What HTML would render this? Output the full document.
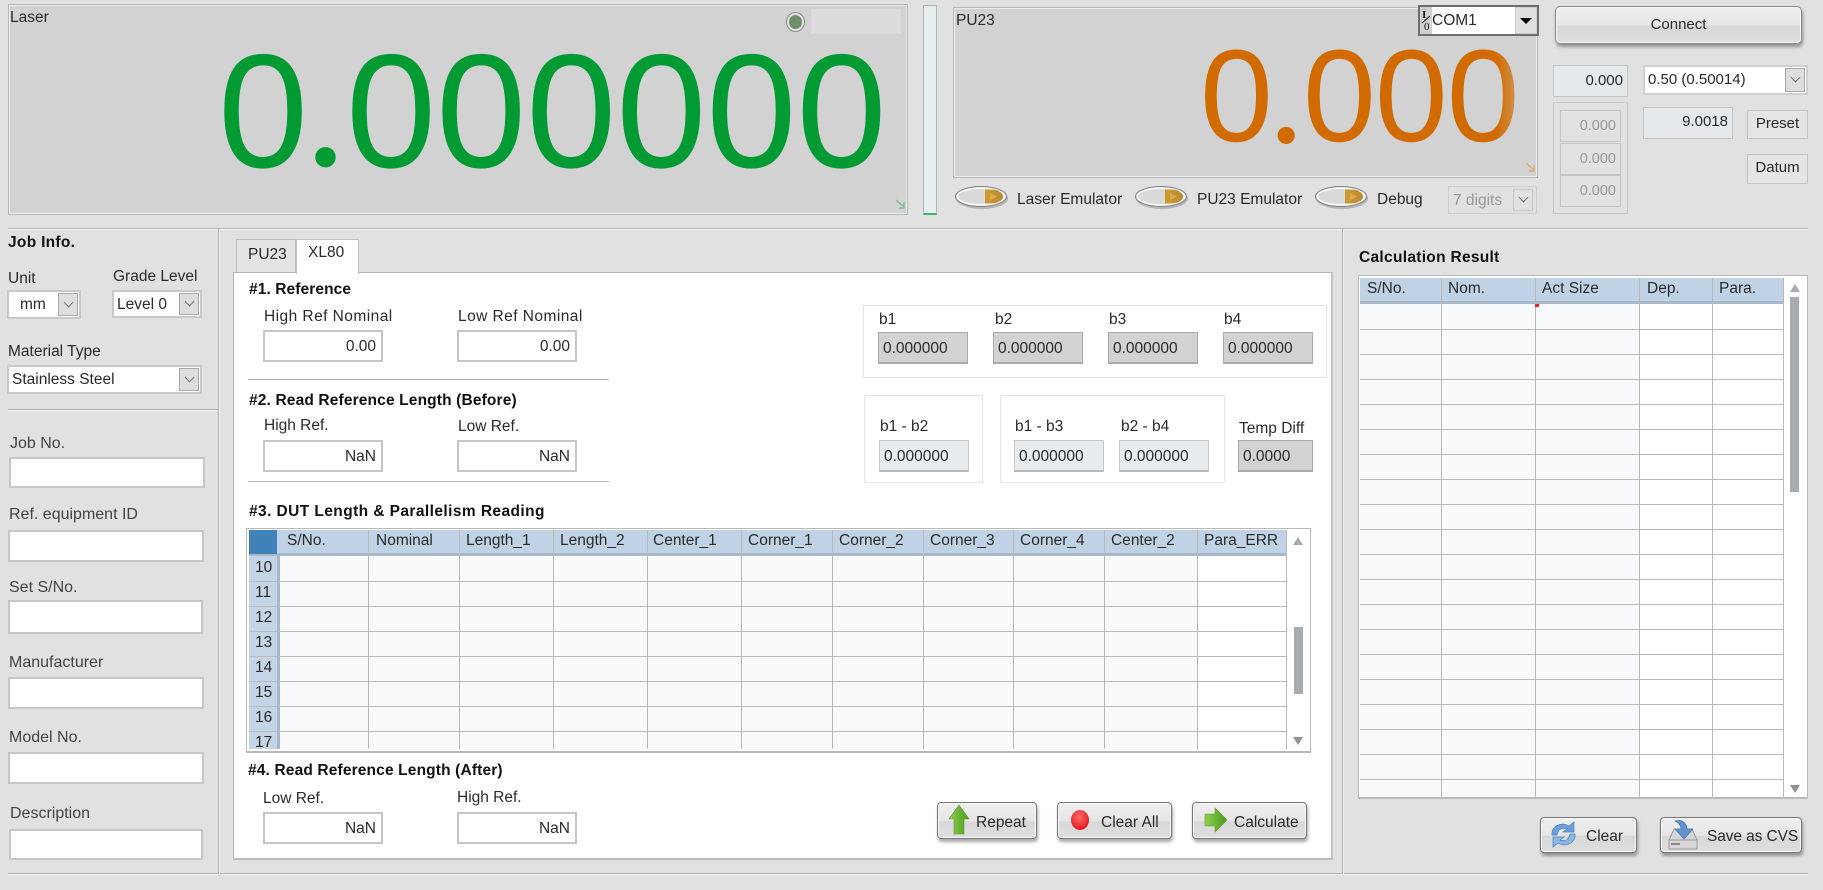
<!DOCTYPE html>
<html><head><meta charset="utf-8"><style>
html,body{margin:0;padding:0;background:#e1e1e1}
#r{position:relative;width:1823px;height:890px;overflow:hidden;background:#e1e1e1;font:15.5px/20px "Liberation Sans",sans-serif;color:#2a2a2a;filter:blur(.35px)}
#r div,#r span.t,#r span.n,#r svg{position:absolute}
.t{white-space:nowrap;line-height:20px}
.n{white-space:nowrap;transform-origin:0 0}
.b{font-weight:bold;color:#111;letter-spacing:.3px}
.g{color:#444}
.w{letter-spacing:.45px}
.in{background:#fff;border:2px solid #c6c6c6;box-sizing:border-box;text-align:right;padding-right:5px;line-height:29px}
.gf{background:#d2d2d2;border:1px solid #aaa;border-bottom:2px solid #aaa;box-sizing:border-box;padding-left:4px;line-height:31px}
.lf{background:#e8ecef;border:1px solid #c4c8ca;border-bottom:2px solid #b5b9bb;box-sizing:border-box;padding-left:4px;line-height:31px}
.box{background:#fff;border:1px solid #e4e4e4;box-sizing:border-box}
.cb{background:#fff;border:2px solid #c9c9c9;box-sizing:border-box;line-height:26px}
.ar{background:#dedede;border:1px solid #a9a9a9;box-sizing:border-box}
.ar:after{content:"";position:absolute;left:50%;top:50%;width:6px;height:6px;margin:-6px 0 0 -3px;border-right:1px solid #777;border-bottom:1px solid #777;transform:rotate(45deg)}
.btn{border:1px solid #777;border-radius:4px;box-sizing:border-box;background:linear-gradient(#efefef 0,#e6e6e6 50%,#d8d8d8 54%,#dedede 100%);box-shadow:inset 0 0 0 1px #f6f6f6,1px 3px 3px rgba(0,0,0,.35)}
.sb{background:#e6e9ec;border:1px solid #c3c6c8;box-sizing:border-box;text-align:center;line-height:26px}
.vl{width:1px;background:#b9b9b9}
.hl{height:1px;background:#b3b3b3;box-shadow:0 1px 0 #f2f2f2}
.ln{background:#b5b5b5}
.rows{background:linear-gradient(transparent 24px,#b9b9b9 24px);background-size:100% 25px}
.up{width:0;height:0;border:5px solid transparent;border-bottom:8px solid #a8acae;border-top:0}
.dn{width:0;height:0;border:5px solid transparent;border-top:8px solid #8f9396;border-bottom:0}
</style></head><body><div id="r">

<!-- Laser panel -->
<div style="left:8px;top:4px;width:900px;height:211px;background:#d2d2d2;border:1px solid #b4babb;box-sizing:border-box;box-shadow:inset 0 0 0 1px #ececec"></div>
<span class="t" style="left:10px;top:8px">Laser</span>
<div style="left:787px;top:13px;width:17px;height:18px;border-radius:50%;background:#6f8f6b;border:2px solid #e3e3e3;box-shadow:0 0 0 1px #8b8b8b;box-sizing:border-box"></div>
<div style="left:811px;top:9px;width:90px;height:25px;background:#dcdcdc"></div>
<span class="n" style="left:218px;top:31px;font-size:162px;line-height:162px;color:#029a33">0</span>
<span class="n" style="left:304px;top:22px;font:172px/172px 'Liberation Serif',serif;color:#029a33">.</span>
<span class="n" style="left:346px;top:31px;font-size:162px;line-height:162px;color:#029a33">000000</span>
<svg style="left:895px;top:199px" width="11" height="10" viewBox="0 0 11 10"><path d="M1 1L9 8M9 3V9H4" fill="none" stroke="#6fc08a" stroke-width="1.2"/></svg>

<!-- bar -->
<div style="left:923px;top:5px;width:14px;height:210px;background:#e8edef;border:1px solid #aeb3b4;border-bottom:2px solid #3db56a;box-sizing:border-box"></div>

<!-- PU23 panel -->
<div style="left:953px;top:7px;width:585px;height:171px;background:#d2d2d2;border:1px solid #b4babb;box-sizing:border-box;box-shadow:inset 0 0 0 1px #ececec"></div>
<span class="t" style="left:956px;top:11px">PU23</span>
<span class="n" style="left:1200px;top:30px;font-size:131px;line-height:131px;color:#d16b00">0</span>
<span class="n" style="left:1268px;top:22px;font:145px/145px 'Liberation Serif',serif;color:#d16b00">.</span>
<span class="n" style="left:1303px;top:30px;font-size:131px;line-height:131px;letter-spacing:-1px;color:#d16b00">000</span>
<div style="left:1497px;top:40px;width:18px;height:105px;background:linear-gradient(90deg,rgba(210,210,210,0),rgba(210,210,210,.35))"></div>
<svg style="left:1525px;top:162px" width="11" height="10" viewBox="0 0 11 10"><path d="M1 1L9 8M9 3V9H4" fill="none" stroke="#e2a56a" stroke-width="1.2"/></svg>

<!-- COM1 -->
<div style="left:1418px;top:5px;width:121px;height:31px;background:#d0d0d0;border:2px solid #6e6e6e;box-sizing:border-box"></div>
<div style="left:1432px;top:7px;width:83px;height:27px;background:#fff"></div>
<div style="left:1516px;top:8px;width:20px;height:25px;background:#e0e0e0"></div>
<div style="left:1520px;top:18px;width:0;height:0;border:6px solid transparent;border-top:6px solid #000;border-bottom:0"></div>
<svg style="left:1420px;top:8px" width="13" height="24" viewBox="0 0 13 24"><text x="2" y="10" font-family="Liberation Serif" font-weight="bold" font-size="11" fill="#111">I</text><path d="M10 8L2 15" stroke="#111"/><text x="4" y="22" font-family="Liberation Serif" font-size="11" fill="#111">0</text></svg>
<span class="t" style="left:1432px;top:11px;font-size:15.5px">COM1</span>

<!-- Connect -->
<div class="btn" style="left:1555px;top:6px;width:247px;height:38px;border-radius:5px;border-color:#8a8a8a;text-align:center;line-height:36px;font-size:15px">Connect</div>

<div class="sb" style="left:1553px;top:65px;width:75px;height:32px;text-align:right;padding-right:4px;line-height:30px;font-size:15px">0.000</div>
<div class="cb" style="left:1643px;top:65px;width:165px;height:30px;padding-left:3px;border-color:#d0d0d0;font-size:15px">0.50 (0.50014)</div>
<div class="ar" style="left:1785px;top:68px;width:20px;height:24px"></div>

<div style="left:1553px;top:102px;width:75px;height:112px;background:#e1e1e1;border:1px solid #c5c7c8;box-sizing:border-box"></div>
<div class="sb" style="left:1560px;top:110px;width:61px;height:32px;background:#e1e1e1;color:#999;text-align:right;padding-right:4px;line-height:30px;font-size:14.5px">0.000</div>
<div class="sb" style="left:1560px;top:143px;width:61px;height:32px;background:#e1e1e1;color:#999;text-align:right;padding-right:4px;line-height:30px;font-size:14.5px">0.000</div>
<div class="sb" style="left:1560px;top:175px;width:61px;height:32px;background:#e1e1e1;color:#999;text-align:right;padding-right:4px;line-height:30px;font-size:14.5px">0.000</div>
<div class="sb" style="left:1643px;top:107px;width:90px;height:32px;text-align:right;padding-right:4px;line-height:28px;font-size:15px">9.0018</div>
<div class="sb" style="left:1747px;top:110px;width:61px;height:29px;background:#e3e5e6;font-size:15px;line-height:25px">Preset</div>
<div class="sb" style="left:1747px;top:154px;width:61px;height:30px;background:#e3e5e6;font-size:15px;line-height:26px">Datum</div>

<!-- toggles -->
<svg style="left:954px;top:185px" width="56" height="26" viewBox="0 0 56 26"><defs><linearGradient id="tg" x1="0" y1="0" x2="1" y2="0"><stop offset="0" stop-color="#cf9a2e"/><stop offset="1" stop-color="#b98a32"/></linearGradient><g id="tog"><ellipse cx="28" cy="13.5" rx="26" ry="10.5" fill="#b5b5b5"/><ellipse cx="27" cy="11.5" rx="25.5" ry="10" fill="#e4e4e4" stroke="#858585"/><ellipse cx="27" cy="11.5" rx="23.5" ry="8.2" fill="#d9d9d9" stroke="#fff" stroke-width="1.2"/><path d="M31 4.5h6c8 0 12 4 12 7s-4 7-12 7h-6z" fill="url(#tg)"/><path d="M36 8l7 3.5-7 3.5z" fill="#d9ad50"/></g></defs><use href="#tog"/></svg>
<span class="t" style="left:1017px;top:190px">Laser Emulator</span>
<svg style="left:1134px;top:185px" width="56" height="26" viewBox="0 0 56 26"><use href="#tog"/></svg>
<span class="t" style="left:1197px;top:190px">PU23 Emulator</span>
<svg style="left:1314px;top:185px" width="56" height="26" viewBox="0 0 56 26"><use href="#tog"/></svg>
<span class="t" style="left:1377px;top:190px">Debug</span>
<div style="left:1448px;top:186px;width:89px;height:28px;border:1px solid #cfcfcf;box-sizing:border-box;color:#999;padding-left:4px;line-height:28px">7 digits</div>
<div class="ar" style="left:1513px;top:189px;width:20px;height:22px;background:#e1e1e1;border-color:#c8c8c8"></div>

<!-- dividers -->
<div class="hl" style="left:8px;top:228px;width:1800px"></div>
<div class="hl" style="left:8px;top:873px;width:1800px"></div>
<div class="hl" style="left:8px;top:409px;width:210px"></div>
<div class="vl" style="left:218px;top:229px;height:645px;box-shadow:1px 0 0 #f2f2f2;background:#b3b3b3"></div>
<div class="vl" style="left:1342px;top:229px;height:645px;box-shadow:1px 0 0 #f2f2f2;background:#b3b3b3"></div>

<!-- Left column -->
<span class="t b" style="left:8px;top:233px">Job Info.</span>
<span class="t" style="left:8px;top:269px">Unit</span>
<span class="t" style="left:113px;top:267px">Grade Level</span>
<div class="cb" style="left:7px;top:290px;width:74px;height:29px;padding-left:11px">mm</div>
<div class="ar" style="left:58px;top:293px;width:20px;height:23px"></div>
<div class="cb" style="left:112px;top:290px;width:90px;height:28px;padding-left:3px">Level 0</div>
<div class="ar" style="left:179px;top:293px;width:20px;height:22px"></div>
<span class="t" style="left:8px;top:342px">Material Type</span>
<div class="cb" style="left:7px;top:365px;width:195px;height:29px;padding-left:3px">Stainless Steel</div>
<div class="ar" style="left:179px;top:368px;width:20px;height:23px"></div>

<span class="t g" style="left:10px;top:434px;font-size:16px">Job No.</span>
<div class="in" style="left:9px;top:457px;width:196px;height:31px"></div>
<span class="t g" style="left:9px;top:505px;font-size:16px">Ref. equipment ID</span>
<div class="in" style="left:8px;top:530px;width:196px;height:32px"></div>
<span class="t g" style="left:9px;top:578px;font-size:16px">Set S/No.</span>
<div class="in" style="left:8px;top:600px;width:195px;height:34px"></div>
<span class="t g" style="left:9px;top:653px;font-size:16px">Manufacturer</span>
<div class="in" style="left:8px;top:677px;width:196px;height:32px"></div>
<span class="t g" style="left:9px;top:728px;font-size:16px">Model No.</span>
<div class="in" style="left:8px;top:752px;width:196px;height:32px"></div>
<span class="t g" style="left:10px;top:804px;font-size:16px">Description</span>
<div class="in" style="left:9px;top:829px;width:194px;height:31px"></div>

<!-- Tabs -->
<div style="left:236px;top:239px;width:60px;height:33px;background:#e4e4e4;border:1px solid #bcbcbc;border-bottom:0;box-sizing:border-box"></div>
<span class="t" style="left:248px;top:245px">PU23</span>
<div style="left:233px;top:272px;width:1100px;height:588px;background:#fff;border:1px solid #b7b7b7;border-bottom:2px solid #bcbcbc;border-right:2px solid #c4c4c4;box-sizing:border-box"></div>
<div style="left:296px;top:239px;width:63px;height:35px;background:#fff;border:1px solid #c4c4c4;border-bottom:0;box-sizing:border-box"></div>
<span class="t" style="left:308px;top:243px">XL80</span>

<span class="t b" style="left:249px;top:280px;letter-spacing:.1px">#1. Reference</span>
<span class="t w" style="left:264px;top:307px">High Ref Nominal</span>
<span class="t w" style="left:458px;top:307px">Low Ref Nominal</span>
<div class="in" style="left:263px;top:330px;width:120px;height:32px">0.00</div>
<div class="in" style="left:457px;top:330px;width:120px;height:32px">0.00</div>
<div class="ln" style="left:248px;top:379px;width:361px;height:1px"></div>

<span class="t b" style="left:249px;top:391px;letter-spacing:.15px">#2. Read Reference Length (Before)</span>
<span class="t" style="left:264px;top:416px">High Ref.</span>
<span class="t" style="left:458px;top:417px">Low Ref.</span>
<div class="in" style="left:263px;top:440px;width:120px;height:32px">NaN</div>
<div class="in" style="left:457px;top:440px;width:120px;height:32px">NaN</div>
<div class="ln" style="left:248px;top:481px;width:361px;height:1px"></div>

<span class="t b" style="left:249px;top:502px;letter-spacing:.42px">#3. DUT Length &amp; Parallelism Reading</span>

<!-- b group -->
<div class="box" style="left:863px;top:305px;width:464px;height:73px"></div>
<span class="t" style="left:879px;top:310px">b1</span><span class="t" style="left:995px;top:310px">b2</span><span class="t" style="left:1109px;top:310px">b3</span><span class="t" style="left:1224px;top:310px">b4</span>
<div class="gf" style="left:878px;top:332px;width:90px;height:32px">0.000000</div>
<div class="gf" style="left:993px;top:332px;width:90px;height:32px">0.000000</div>
<div class="gf" style="left:1108px;top:332px;width:90px;height:32px">0.000000</div>
<div class="gf" style="left:1223px;top:332px;width:90px;height:32px">0.000000</div>

<div class="box" style="left:864px;top:395px;width:119px;height:88px"></div>
<div class="box" style="left:1000px;top:395px;width:225px;height:88px"></div>
<span class="t" style="left:880px;top:417px">b1 - b2</span>
<span class="t" style="left:1015px;top:417px">b1 - b3</span>
<span class="t" style="left:1121px;top:417px">b2 - b4</span>
<span class="t" style="left:1239px;top:419px">Temp Diff</span>
<div class="lf" style="left:879px;top:440px;width:90px;height:32px">0.000000</div>
<div class="lf" style="left:1014px;top:440px;width:90px;height:32px">0.000000</div>
<div class="lf" style="left:1119px;top:440px;width:90px;height:32px">0.000000</div>
<div class="gf" style="left:1238px;top:440px;width:75px;height:32px">0.0000</div>

<!-- Table 1 -->
<div style="left:246px;top:528px;width:1065px;height:225px;background:#fff;border:1px solid #b9b9b9;border-bottom:2px solid #b9b9b9;box-sizing:border-box"></div>
<div style="left:280px;top:557px;width:917px;height:192px;background:#f9fafc"></div>
<div style="left:249px;top:530px;width:1038px;height:23px;background:#c0d2e5"></div>
<div style="left:249px;top:553px;width:1038px;height:3px;background:#a9b8c8"></div>
<div style="left:249px;top:530px;width:28px;height:24px;background:#3f82b8"></div>
<div style="left:249px;top:556px;width:31px;height:193px;background:#c4d5e7"></div>
<div style="left:277px;top:556px;width:3px;height:193px;background:#a9b8c8"></div>
<div class="rows" style="left:249px;top:557px;width:1038px;height:192px"></div>
<div class="vl" style="left:368px;top:530px;height:219px"></div>
<div class="vl" style="left:459px;top:530px;height:219px"></div>
<div class="vl" style="left:553px;top:530px;height:219px"></div>
<div class="vl" style="left:647px;top:530px;height:219px"></div>
<div class="vl" style="left:741px;top:530px;height:219px"></div>
<div class="vl" style="left:832px;top:530px;height:219px"></div>
<div class="vl" style="left:923px;top:530px;height:219px"></div>
<div class="vl" style="left:1013px;top:530px;height:219px"></div>
<div class="vl" style="left:1104px;top:530px;height:219px"></div>
<div class="vl" style="left:1197px;top:530px;height:219px"></div>
<div class="vl" style="left:1286px;top:530px;height:219px"></div>
<span class="t" style="left:287px;top:531px">S/No.</span>
<span class="t" style="left:376px;top:531px">Nominal</span>
<span class="t" style="left:466px;top:531px">Length_1</span>
<span class="t" style="left:560px;top:531px">Length_2</span>
<span class="t" style="left:653px;top:531px">Center_1</span>
<span class="t" style="left:748px;top:531px">Corner_1</span>
<span class="t" style="left:839px;top:531px">Corner_2</span>
<span class="t" style="left:930px;top:531px">Corner_3</span>
<span class="t" style="left:1020px;top:531px">Corner_4</span>
<span class="t" style="left:1111px;top:531px">Center_2</span>
<span class="t" style="left:1204px;top:531px">Para_ERR</span>
<span class="t" style="left:255px;top:558px">10</span>
<span class="t" style="left:255px;top:583px">11</span>
<span class="t" style="left:255px;top:608px">12</span>
<span class="t" style="left:255px;top:633px">13</span>
<span class="t" style="left:255px;top:658px">14</span>
<span class="t" style="left:255px;top:683px">15</span>
<span class="t" style="left:255px;top:708px">16</span>
<span class="t" style="left:255px;top:733px;height:16px;overflow:hidden">17</span>
<div class="up" style="left:1293px;top:537px"></div>
<div style="left:1294px;top:627px;width:9px;height:67px;background:#a8acae"></div>
<div class="dn" style="left:1293px;top:737px"></div>

<span class="t b" style="left:248px;top:761px;letter-spacing:.15px">#4. Read Reference Length (After)</span>
<span class="t" style="left:263px;top:789px">Low Ref.</span>
<span class="t" style="left:457px;top:788px">High Ref.</span>
<div class="in" style="left:263px;top:812px;width:120px;height:32px">NaN</div>
<div class="in" style="left:457px;top:812px;width:120px;height:32px">NaN</div>

<!-- Buttons -->
<div class="btn" style="left:937px;top:802px;width:100px;height:37px"></div>
<svg style="left:947px;top:804px" width="24" height="32" viewBox="0 0 24 32"><defs><linearGradient id="gr" x1="0" y1="0" x2="1" y2="0"><stop offset="0" stop-color="#8fd14f"/><stop offset="1" stop-color="#4a9a1e"/></linearGradient></defs><path d="M12 1L22 15H17V30H7V15H2Z" fill="url(#gr)" stroke="#5c9a2e" stroke-width=".6"/></svg>
<span class="t" style="left:976px;top:813px">Repeat</span>
<div class="btn" style="left:1057px;top:802px;width:115px;height:37px"></div>
<svg style="left:1070px;top:808px" width="20" height="24" viewBox="0 0 20 24"><defs><radialGradient id="rd" cx=".45" cy=".35" r=".7"><stop offset="0" stop-color="#ff6a6a"/><stop offset="1" stop-color="#e2121e"/></radialGradient></defs><ellipse cx="10" cy="12" rx="9" ry="10" fill="url(#rd)"/></svg>
<span class="t" style="left:1101px;top:813px">Clear All</span>
<div class="btn" style="left:1192px;top:802px;width:115px;height:37px"></div>
<svg style="left:1204px;top:807px" width="24" height="26" viewBox="0 0 24 26"><path d="M1 7H11V1L23 13L11 25V19H1Z" fill="url(#gr)" stroke="#5c9a2e" stroke-width=".6"/></svg>
<span class="t" style="left:1234px;top:813px">Calculate</span>

<!-- Calculation Result -->
<span class="t b" style="left:1359px;top:248px">Calculation Result</span>
<div style="left:1358px;top:275px;width:450px;height:524px;background:#fff;border:1px solid #b9b9b9;border-bottom:2px solid #b9b9b9;box-sizing:border-box"></div>
<div style="left:1360px;top:304px;width:279px;height:493px;background:#f9fafc"></div>
<div style="left:1360px;top:278px;width:424px;height:23px;background:#c0d2e5"></div>
<div style="left:1360px;top:301px;width:424px;height:3px;background:#a9b8c8"></div>
<div class="rows" style="left:1360px;top:305px;width:424px;height:492px"></div>
<div class="vl" style="left:1441px;top:278px;height:519px"></div>
<div class="vl" style="left:1535px;top:278px;height:519px"></div>
<div class="vl" style="left:1639px;top:278px;height:519px"></div>
<div class="vl" style="left:1712px;top:278px;height:519px"></div>
<div class="vl" style="left:1783px;top:278px;height:519px"></div>
<span class="t" style="left:1367px;top:279px">S/No.</span>
<span class="t" style="left:1448px;top:279px">Nom.</span>
<span class="t" style="left:1542px;top:279px">Act Size</span>
<span class="t" style="left:1647px;top:279px">Dep.</span>
<span class="t" style="left:1719px;top:279px">Para.</span>
<div style="left:1535px;top:304px;width:4px;height:3px;background:#ee2222"></div>
<div class="up" style="left:1790px;top:284px"></div>
<div style="left:1790px;top:297px;width:9px;height:195px;background:#a8acae"></div>
<div class="dn" style="left:1790px;top:785px"></div>

<div class="btn" style="left:1540px;top:817px;width:97px;height:36px"></div>
<svg style="left:1550px;top:821px" width="27" height="27" viewBox="0 0 27 27"><path d="M2 14C1 6 10 0 19 5L24 1V11H13L17 8C11 6 8 9 7 14Z" fill="#6c9fd8" stroke="#4a7fbd" stroke-width=".7"/><path d="M25 13C26 21 17 27 8 22L3 26V16H14L10 19C16 21 19 18 20 13Z" fill="#8ab6e6" stroke="#4a7fbd" stroke-width=".7"/></svg>
<span class="t" style="left:1586px;top:827px">Clear</span>
<div class="btn" style="left:1660px;top:817px;width:142px;height:36px"></div>
<svg style="left:1667px;top:819px" width="32" height="32" viewBox="0 0 32 32"><path d="M7 10L2 21V30H30V21L25 10Z" fill="#d6d6d6" stroke="#9a9a9a"/><path d="M2 21H30" stroke="#9a9a9a"/><path d="M4 25H13" stroke="#888" stroke-width="2"/><path d="M8 2C15 0 20 4 20 10H26L17 20L8 10H14C14 7 12 4 8 2Z" fill="#5f94cf" stroke="#3f72ad" stroke-width=".6"/></svg>
<span class="t" style="left:1707px;top:827px;letter-spacing:-.1px">Save as CVS</span>

</div></body></html>
